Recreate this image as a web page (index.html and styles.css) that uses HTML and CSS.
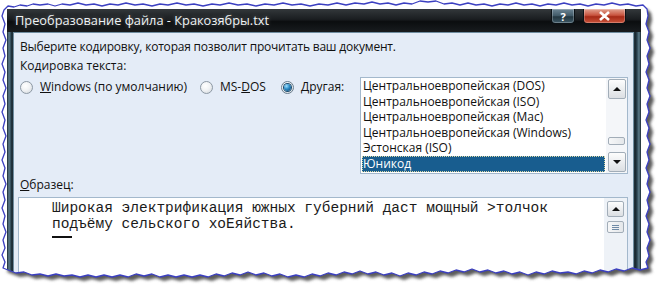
FILE: index.html
```html
<html>
  <head>
    <meta charset="utf-8" />
    <link rel="stylesheet" href="styles.css">
  </head>
  <body>
    <div class="stage">
      <div class="window">
        <div class="titlebar">
          <span class="title">Преобразование файла - Кракозябры.txt</span>
          <div class="caption-buttons">
            <span class="caption-btn help">?</span>
            <span class="caption-btn close">
              <svg width="13" height="10" viewBox="0 0 13 10"><path d="M2 1L11 9M11 1L2 9" stroke="#fff" stroke-width="2.6"/></svg>
            </span>
          </div>
        </div>

        <div class="client">
          <p class="prompt">Выберите кодировку, которая позволит прочитать ваш документ.</p>
          <p class="label">Кодировка текста:</p>

          <div class="encoding-row">
            <label class="radio"><span class="dot"></span><span><u>W</u>indows (по умолчанию)</span></label>
            <label class="radio"><span class="dot"></span><span>MS-<u>D</u>OS</span></label>
            <label class="radio"><span class="dot is-checked"></span><span><u>Д</u>ругая:</span></label>

            <div class="listbox">
              <ul class="items">
                <li>Центральноевропейская (DOS)</li>
                <li>Центральноевропейская (ISO)</li>
                <li>Центральноевропейская (Mac)</li>
                <li>Центральноевропейская (Windows)</li>
                <li>Эстонская (ISO)</li>
                <li class="is-selected">Юникод</li>
              </ul>
              <div class="scrollbar">
                <span class="sb-btn"><span class="arrow up"></span></span>
                <span class="sb-fill"></span>
                <span class="sb-thumb small"></span>
                <span class="sb-btn"><span class="arrow down"></span></span>
              </div>
            </div>
          </div>

          <p class="label"><u>О</u>бразец:</p>
          <div class="sample">
            <pre class="sample-text">Широкая электрификация южных губерний даст мощный &gt;толчок
подъёму сельского хоЕяйства.</pre>
            <span class="caret"></span>
            <div class="scrollbar sample-scroll">
              <span class="sb-btn"><span class="arrow up"></span></span>
              <span class="sb-thumb grip"><i></i><i></i><i></i></span>
            </div>
          </div>
        </div>
      </div>

      <svg class="torn" width="659" height="285" viewBox="0 0 659 285">
        <defs>
          <clipPath id="outside">
            <path clip-rule="evenodd" d="M0 0H659V285H0Z M4 10 L8 6 L14 7 L20 5 L27 6 L33 4 L40 5 L48 4 L55 6 L62 4 L70 5 L78 3 L86 5 L94 4 L102 6 L110 4 L118 5 L126 3 L135 5 L143 4 L152 6 L160 4 L168 5 L177 3 L186 5 L194 4 L203 6 L212 4 L220 5 L229 3 L238 5 L247 4 L256 6 L265 4 L274 5 L283 3 L292 5 L301 4 L310 6 L319 4 L328 5 L337 3 L346 5 L355 3 L364 4 L372 2 L380 4 L388 3 L396 5 L404 3 L412 4 L420 1 L428 2 L436 1 L444 4 L452 3 L460 5 L468 3 L476 5 L484 4 L492 6 L500 4 L508 5 L516 3 L524 5 L532 4 L540 6 L548 4 L556 5 L564 3 L572 5 L580 4 L588 6 L596 4 L604 5 L612 3 L620 5 L628 4 L636 6 L643 5 L647 9 L648 16 L646 24 L649 32 L647 40 L650 48 L647 56 L649 64 L646 72 L649 80 L647 88 L650 96 L647 104 L649 112 L646 120 L649 128 L647 136 L650 144 L647 152 L649 160 L646 168 L649 176 L647 184 L650 192 L647 200 L649 208 L646 216 L649 224 L647 232 L650 240 L647 248 L649 256 L646 262 L648 268 L640 270 L632 268 L624 271 L616 269 L608 272 L600 270 L592 273 L584 271 L576 274 L568 272 L560 273 L552 271 L544 274 L536 272 L528 275 L520 272 L512 274 L504 271 L496 273 L488 270 L480 272 L472 269 L464 272 L456 270 L448 273 L440 271 L432 274 L424 272 L416 275 L408 273 L400 276 L392 273 L384 275 L376 272 L368 274 L360 271 L352 274 L344 272 L336 275 L328 273 L320 276 L312 274 L304 277 L296 275 L288 277 L280 274 L272 276 L264 273 L256 275 L248 272 L240 275 L232 273 L224 276 L216 274 L208 277 L200 275 L192 277 L184 275 L176 277 L168 275 L160 277 L152 274 L144 276 L136 274 L128 277 L120 275 L112 277 L104 275 L96 277 L88 275 L80 277 L72 275 L64 276 L56 274 L48 276 L40 274 L32 275 L24 272 L16 273 L8 270 L3 268 L5 262 L2 255 L5 248 L3 240 L6 232 L3 224 L5 216 L2 208 L5 200 L3 192 L6 184 L3 176 L5 168 L2 160 L5 152 L3 144 L6 136 L3 128 L5 120 L2 112 L5 104 L3 96 L6 88 L3 80 L5 72 L2 64 L5 56 L3 48 L6 40 L3 32 L5 24 L2 16 Z"/>
          </clipPath>
          <filter id="soft" x="-5%" y="-5%" width="110%" height="110%">
            <feGaussianBlur stdDeviation="1.6"/>
          </filter>
          <path id="edge" d="M4 10 L8 6 L14 7 L20 5 L27 6 L33 4 L40 5 L48 4 L55 6 L62 4 L70 5 L78 3 L86 5 L94 4 L102 6 L110 4 L118 5 L126 3 L135 5 L143 4 L152 6 L160 4 L168 5 L177 3 L186 5 L194 4 L203 6 L212 4 L220 5 L229 3 L238 5 L247 4 L256 6 L265 4 L274 5 L283 3 L292 5 L301 4 L310 6 L319 4 L328 5 L337 3 L346 5 L355 3 L364 4 L372 2 L380 4 L388 3 L396 5 L404 3 L412 4 L420 1 L428 2 L436 1 L444 4 L452 3 L460 5 L468 3 L476 5 L484 4 L492 6 L500 4 L508 5 L516 3 L524 5 L532 4 L540 6 L548 4 L556 5 L564 3 L572 5 L580 4 L588 6 L596 4 L604 5 L612 3 L620 5 L628 4 L636 6 L643 5 L647 9 L648 16 L646 24 L649 32 L647 40 L650 48 L647 56 L649 64 L646 72 L649 80 L647 88 L650 96 L647 104 L649 112 L646 120 L649 128 L647 136 L650 144 L647 152 L649 160 L646 168 L649 176 L647 184 L650 192 L647 200 L649 208 L646 216 L649 224 L647 232 L650 240 L647 248 L649 256 L646 262 L648 268 L640 270 L632 268 L624 271 L616 269 L608 272 L600 270 L592 273 L584 271 L576 274 L568 272 L560 273 L552 271 L544 274 L536 272 L528 275 L520 272 L512 274 L504 271 L496 273 L488 270 L480 272 L472 269 L464 272 L456 270 L448 273 L440 271 L432 274 L424 272 L416 275 L408 273 L400 276 L392 273 L384 275 L376 272 L368 274 L360 271 L352 274 L344 272 L336 275 L328 273 L320 276 L312 274 L304 277 L296 275 L288 277 L280 274 L272 276 L264 273 L256 275 L248 272 L240 275 L232 273 L224 276 L216 274 L208 277 L200 275 L192 277 L184 275 L176 277 L168 275 L160 277 L152 274 L144 276 L136 274 L128 277 L120 275 L112 277 L104 275 L96 277 L88 275 L80 277 L72 275 L64 276 L56 274 L48 276 L40 274 L32 275 L24 272 L16 273 L8 270 L3 268 L5 262 L2 255 L5 248 L3 240 L6 232 L3 224 L5 216 L2 208 L5 200 L3 192 L6 184 L3 176 L5 168 L2 160 L5 152 L3 144 L6 136 L3 128 L5 120 L2 112 L5 104 L3 96 L6 88 L3 80 L5 72 L2 64 L5 56 L3 48 L6 40 L3 32 L5 24 L2 16 Z"/>
        </defs>
        <g clip-path="url(#outside)">
          <rect width="659" height="285" fill="#fff"/>
          <use href="#edge" transform="translate(4 4)" fill="#5c5c5c" filter="url(#soft)"/>
        </g>
        <use href="#edge" fill="none" stroke="#3b3fc0" stroke-width="1.3" stroke-linejoin="round"/>
      </svg>
    </div>
  </body>
</html>
```

FILE: styles.css
```css
:root {
  --frame: #2b3d47;
  --client-bg: #e4ecf7;
  --field-border: #a3b8cc;
  --selected: #185d8f;
  --ui-font: 'Open Sans', 'DejaVu Sans', sans-serif;
}

* {
  box-sizing: border-box;
}

html,
body {
  margin: 0;
  background: #fff;
}

body {
  font-family: var(--ui-font);
  font-size: 12px;
  color: #111;
}

.stage {
  position: relative;
  width: 659px;
  height: 285px;
  overflow: hidden;
  padding: 9px 0 0 7px;
}

/* torn paper edge + drop shadow, laid over the screenshot */
.torn {
  position: absolute;
  top: 0;
  left: 0;
  pointer-events: none;
}

.window {
  width: 634px;
  height: 270px;
  overflow: hidden;
  background: linear-gradient(90deg, #17252c 0, #5e7e8d 2px, #2b4350 4px, #14222a 5px, transparent 6px),
    linear-gradient(270deg, #17252c 0, #5e7e8d 2px, #2b4350 4px, #14222a 6px, transparent 7px);
  background-color: var(--frame);
  padding: 0 7px 0 6px;
  display: flex;
  flex-direction: column;
}

.titlebar {
  height: 24px;
  margin: 0 -7px 0 -6px;
  padding: 0 15px 0 8px;
  background: linear-gradient(180deg, #33383b 0, #1a1d20 45%, #0b0d0f 55%, #181c1f 100%);
  display: flex;
  align-items: flex-start;
  justify-content: space-between;
}

.title {
  color: #eef2f4;
  font-size: 12.8px;
  line-height: 23px;
  text-shadow: 0 0 4px rgba(255, 255, 255, 0.35);
}

.caption-buttons {
  display: flex;
  gap: 8px;
}

.caption-btn {
  height: 15px;
  display: flex;
  align-items: center;
  justify-content: center;
  border: 1px solid #0b1115;
  border-top: none;
  border-radius: 0 0 4px 4px;
  box-shadow: inset 0 0 0 1px rgba(255, 255, 255, 0.25);
}

.caption-btn.help {
  width: 24px;
  color: #fff;
  font-weight: 700;
  font-size: 11px;
  line-height: 13px;
  background: linear-gradient(180deg, #6d8594 0, #3f5866 50%, #23363f 55%, #3d5866 100%);
}

.caption-btn.close {
  width: 43px;
  background: linear-gradient(180deg, #e3a391 0, #c8533e 45%, #a62a17 55%, #c9533a 100%);
}

.client {
  flex: 1;
  background: var(--client-bg);
  padding: 7px 6px 0 7px;
  box-shadow: inset 0 0 0 1px #6f8da0;
}

.prompt,
.label {
  margin: 0;
  line-height: 16px;
  white-space: nowrap;
}

.prompt {
  letter-spacing: -0.2px;
}

.label {
  margin-top: 3px;
}

.encoding-row {
  margin-top: 3px;
  display: grid;
  grid-template-columns: 180px 81px 79px 268px;
  align-items: start;
}

.radio {
  display: flex;
  align-items: center;
  gap: 7px;
  margin-top: 2px;
  line-height: 16px;
  white-space: nowrap;
}

.dot {
  width: 13px;
  height: 13px;
  border-radius: 50%;
  border: 1px solid #8c98a4;
  background: radial-gradient(circle at 40% 35%, #ffffff 0, #f1f3f5 45%, #cdd3d8 100%);
  display: flex;
  align-items: center;
  justify-content: center;
  flex: none;
}

.dot.is-checked {
  border-color: #6a7e8e;
}

.dot.is-checked::after {
  content: '';
  width: 7px;
  height: 7px;
  border-radius: 50%;
  background: radial-gradient(circle at 35% 30%, #9fe0ff 0, #2a8ac4 45%, #0c3e66 100%);
  box-shadow: 0 0 0 1px #1c4b6d;
}

.listbox {
  height: 97px;
  border: 1px solid var(--field-border);
  background: #fff;
  display: flex;
}

.items {
  list-style: none;
  margin: 0;
  padding: 0 1px;
  flex: 1;
}

.items li {
  height: 15.6px;
  line-height: 15.6px;
  padding-left: 1px;
  white-space: nowrap;
}

.items li.is-selected {
  background: var(--selected);
  color: #fff;
  outline: 1px dotted #d8d6a4;
  outline-offset: -1px;
}

.scrollbar {
  width: 21px;
  padding: 1px;
  display: flex;
  flex-direction: column;
  align-items: center;
  background: #f4f6f9;
}

.sb-btn {
  width: 18px;
  height: 20px;
  border: 1px solid #a2adb8;
  border-radius: 2px;
  background: linear-gradient(180deg, #fdfdfd 0, #eceef0 50%, #dcdfe3 100%);
  display: flex;
  align-items: center;
  justify-content: center;
}

.sb-fill {
  flex: 1;
}

.sb-thumb {
  width: 17px;
  border: 1px solid #a2adb8;
  border-radius: 2px;
  background: linear-gradient(90deg, #f6f7f8 0, #e4e7ea 100%);
}

.sb-thumb.small {
  height: 8px;
  margin-bottom: 7px;
}

.arrow {
  width: 0;
  height: 0;
  border-left: 4px solid transparent;
  border-right: 4px solid transparent;
}

.arrow.up {
  border-bottom: 4px solid #111;
}

.arrow.down {
  border-top: 4px solid #111;
}

.sample {
  position: relative;
  margin: 4px 0 0 -2px;
  height: 90px;
  border: 1px solid var(--field-border);
  background: #fff;
  display: flex;
}

.sample-text {
  flex: 1;
  margin: 0;
  padding: 2px 0 0 33px;
  font-family: 'Liberation Mono', monospace;
  font-size: 14.5px;
  line-height: 16px;
  color: #1a1a1a;
}

.caret {
  position: absolute;
  left: 33px;
  top: 38px;
  width: 20px;
  height: 2px;
  background: #111;
}

.sample-scroll {
  width: 23px;
  padding-top: 3px;
  gap: 4px;
  background: #eef2f7;
}

.sample-scroll .sb-btn {
  width: 17px;
  height: 16px;
}

.sb-thumb.grip {
  height: 12px;
  display: flex;
  flex-direction: column;
  align-items: center;
  justify-content: center;
  gap: 1px;
}

.sb-thumb.grip i {
  width: 7px;
  height: 1px;
  background: #6f8aa6;
}
```
